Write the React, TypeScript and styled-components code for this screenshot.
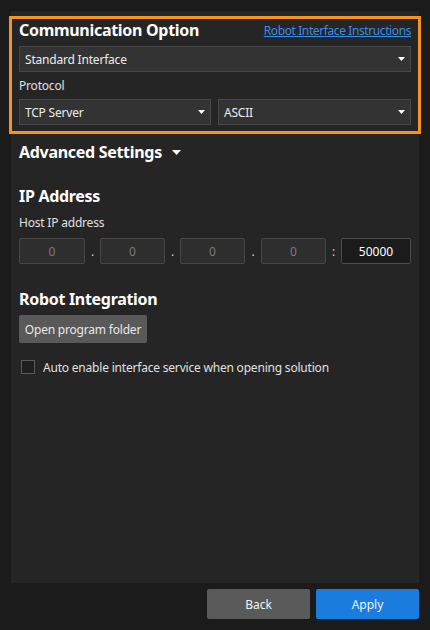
import React from "react";
import styled, { createGlobalStyle } from "styled-components";

const Global = createGlobalStyle`
  html, body { margin: 0; padding: 0; background: #1b1b1b; }
  body { font-family: "Noto Sans", "Liberation Sans", sans-serif; color: #e6e6e6; }
  * { box-sizing: border-box; }
`;

const Window = styled.div`
  width: 430px;
  height: 630px;
  padding: 11px 11px 11px 11px;
  display: flex;
  flex-direction: column;
  background: #1b1b1b;
`;

const Panel = styled.div`
  flex: 1;
  background: #252525;
  padding: 5px 8px 0 8px;
  display: flex;
  flex-direction: column;
`;

const Highlight = styled.section`
  margin: 0 -10px 0 -10px;
  border: 3px solid #f7941d;
  padding: 0 7px 6px 7px;
  display: flex;
  flex-direction: column;
`;

const TitleRow = styled.div`
  height: 27px;
  padding-bottom: 5px;
  display: flex;
  align-items: center;
  justify-content: space-between;
`;

const Heading = styled.h2<{ $top?: number }>`
  margin: ${(p) => p.$top ?? 0}px 0 0 0;
  height: 24px;
  display: flex;
  align-items: center;
  gap: 10px;
  font-size: 16px;
  font-weight: 700;
  color: #ffffff;
  letter-spacing: -0.3px;
`;

const Link = styled.a`
  font-size: 12px;
  color: #3a8ee6;
  text-decoration: underline;
  letter-spacing: -0.4px;
  cursor: pointer;
`;

const Select = styled.div`
  height: 26px;
  background: #333333;
  border: 1px solid #474747;
  display: flex;
  align-items: center;
  justify-content: space-between;
  padding: 0 5px 0 5px;
  font-size: 12px;
  color: #ececec;
  letter-spacing: -0.2px;
`;

const Label = styled.div<{ $h: number; $top?: number }>`
  height: ${(p) => p.$h}px;
  margin-top: ${(p) => p.$top ?? 0}px;
  display: flex;
  align-items: center;
  font-size: 12px;
  color: #e0e0e0;
  letter-spacing: -0.2px;
`;

const SelectPair = styled.div`
  display: grid;
  grid-template-columns: 192px 193px;
  justify-content: space-between;
`;

const Caret = ({ w = 7, h = 4 }: { w?: number; h?: number }) => (
  <svg width={w} height={h} viewBox={`0 0 ${w} ${h}`}>
    <polygon points={`0,0 ${w},0 ${w / 2},${h}`} fill="#ffffff" />
  </svg>
);

const Content = styled.div`
  display: flex;
  flex-direction: column;
`;

const IpRow = styled.div`
  margin-top: 6px;
  display: grid;
  grid-template-columns: 66px 15px 65px 15px 65px 16px 65px 15px 70px;
  height: 26px;
`;

const IpBox = styled.div<{ $port?: boolean }>`
  border: 1px solid ${(p) => (p.$port ? "#4c4c4c" : "#474747")};
  border-radius: 2px;
  background: ${(p) => (p.$port ? "#1b1b1b" : "#2e2e2e")};
  color: ${(p) => (p.$port ? "#ffffff" : "#7a7a7a")};
  font-size: 12px;
  display: flex;
  align-items: center;
  justify-content: center;
`;

const Sep = styled.div`
  display: flex;
  align-items: center;
  justify-content: center;
  font-size: 12px;
  color: #cfcfcf;
`;

const Button = styled.button`
  margin-top: 4px;
  align-self: flex-start;
  width: 128px;
  height: 28px;
  background: #595959;
  border: none;
  border-radius: 2px;
  color: #e8e8e8;
  font-family: inherit;
  font-size: 12px;
  letter-spacing: -0.2px;
  padding: 0;
`;

const CheckRow = styled.label`
  margin-top: 14px;
  height: 20px;
  display: flex;
  align-items: center;
  gap: 8px;
  padding-left: 2px;
  font-size: 12px;
  color: #e0e0e0;
  letter-spacing: -0.2px;
`;

const Box = styled.span`
  width: 14px;
  height: 14px;
  border: 1px solid #5a5a5a;
  background: #1e1e1e;
`;

const Footer = styled.div`
  height: 36px;
  display: flex;
  justify-content: flex-end;
  align-items: flex-end;
  gap: 6px;
`;

const FooterButton = styled.button<{ $primary?: boolean }>`
  width: 103px;
  height: 30px;
  border: none;
  border-radius: 2px;
  background: ${(p) => (p.$primary ? "#1a7ddd" : "#5a5a5a")};
  color: #f2f2f2;
  font-family: inherit;
  font-size: 12px;
  padding: 0;
`;

export default function App() {
  return (
    <>
      <Global />
      <Window>
        <Panel>
          <Highlight>
            <TitleRow>
              <Heading>Communication Option</Heading>
              <Link>Robot Interface Instructions</Link>
            </TitleRow>
            <Select>
              <span>Standard Interface</span>
              <Caret />
            </Select>
            <Label $h={27}>Protocol</Label>
            <SelectPair>
              <Select>
                <span>TCP Server</span>
                <Caret />
              </Select>
              <Select>
                <span>ASCII</span>
                <Caret />
              </Select>
            </SelectPair>
          </Highlight>
          <Content>
            <Heading $top={6}>
              Advanced Settings <Caret w={9} h={5} />
            </Heading>
            <Heading $top={20}>IP Address</Heading>
            <Label $h={20} $top={4}>Host IP address</Label>
            <IpRow>
              <IpBox>0</IpBox>
              <Sep>.</Sep>
              <IpBox>0</IpBox>
              <Sep>.</Sep>
              <IpBox>0</IpBox>
              <Sep>.</Sep>
              <IpBox>0</IpBox>
              <Sep>:</Sep>
              <IpBox $port>50000</IpBox>
            </IpRow>
            <Heading $top={23}>Robot Integration</Heading>
            <Button>Open program folder</Button>
            <CheckRow>
              <Box />
              Auto enable interface service when opening solution
            </CheckRow>
          </Content>
        </Panel>
        <Footer>
          <FooterButton>Back</FooterButton>
          <FooterButton $primary>Apply</FooterButton>
        </Footer>
      </Window>
    </>
  );
}
